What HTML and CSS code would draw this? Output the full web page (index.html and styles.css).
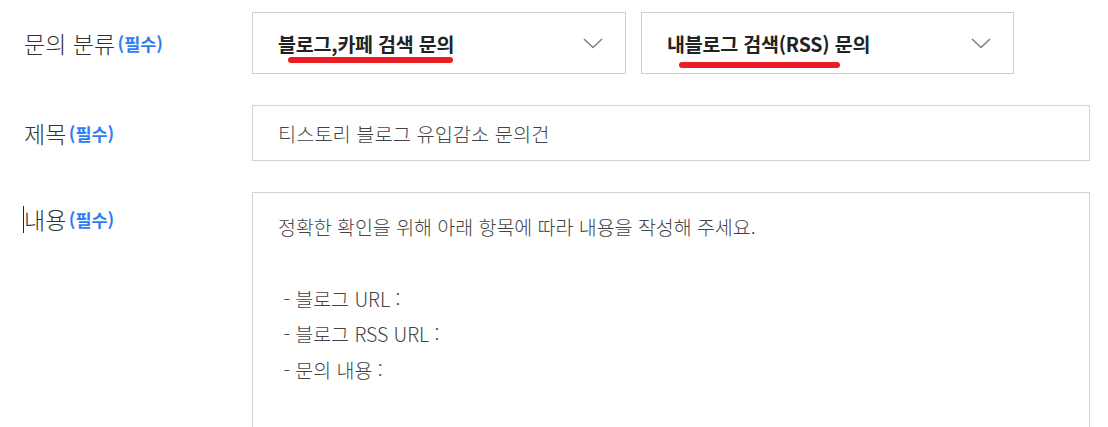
FILE: index.html
```html
<!DOCTYPE html>
<html lang="ko">
<head>
<meta charset="utf-8">
<title>문의하기</title>
<link rel="stylesheet" href="styles.css">
</head>
<body>
<form class="form">
  <div class="row row-select">
    <div class="label">문의 분류 <em class="req">(필수)</em></div>
    <div class="field selects">
      <div class="select select-1">
        <span class="select-text">블로그,카페 검색 문의</span>
        <svg class="chev" width="20" height="11" viewBox="0 0 20 11"><path d="M1 1 L10 9.5 L19 1" fill="none" stroke="#7d828a" stroke-width="1.6"/></svg>
        <span class="mark mark-1"></span>
      </div>
      <div class="select select-2">
        <span class="select-text">내블로그 검색(RSS) 문의</span>
        <svg class="chev" width="20" height="11" viewBox="0 0 20 11"><path d="M1 1 L10 9.5 L19 1" fill="none" stroke="#7d828a" stroke-width="1.6"/></svg>
        <span class="mark mark-2"></span>
      </div>
    </div>
  </div>
  <div class="row row-input">
    <div class="label">제목 <em class="req">(필수)</em></div>
    <div class="field">
      <div class="input">티스토리 블로그 유입감소 문의건</div>
    </div>
  </div>
  <div class="row row-area">
    <div class="label label-top"><span class="caret"></span>내용 <em class="req">(필수)</em></div>
    <div class="field">
      <div class="textarea">정확한 확인을 위해 아래 항목에 따라 내용을 작성해 주세요.

 - 블로그 URL :
 - 블로그 RSS URL :
 - 문의 내용 :</div>
    </div>
  </div>
</form>
</body>
</html>
```

FILE: styles.css
```css
* { box-sizing: border-box; }
html, body { margin: 0; padding: 0; background: #fff; }
body {
  font-family: "Noto Sans CJK KR", "Noto Sans", sans-serif;
  color: #333;
  overflow: hidden;
}
.form {
  display: flex;
  flex-direction: column;
  gap: 31px;
  padding-top: 12px;
}
.row {
  display: flex;
  align-items: center;
}
.row-area { align-items: flex-start; }
.label {
  width: 252px;
  flex: none;
  padding-left: 24px;
  font-size: 23px;
  font-weight: 300;
  color: #333;
  line-height: 27px;
  display: flex;
  align-items: center;
  white-space: pre;
}
.label-top { margin-top: 14px; }
.caret {
  display: inline-block;
  width: 1px;
  height: 27px;
  background: #222;
  margin-left: -1px;
}
.req {
  font-style: normal;
  font-size: 17.5px;
  font-weight: 700;
  color: #2d7cf5;
  margin-left: -4px;
}
.field { width: 838px; flex: none; }
.selects {
  display: flex;
  gap: 15px;
  width: 762px;
}
.select {
  position: relative;
  height: 62px;
  border: 1px solid #cfcfcf;
  display: flex;
  align-items: center;
  justify-content: space-between;
  padding: 0 22px 0 25px;
  font-size: 19.5px;
  font-weight: 700;
  color: #222;
  letter-spacing: -0.2px;
}
.select-1 { width: 374px; }
.select-2 { width: 373px; }
.chev { display: block; flex: none; }
.mark {
  position: absolute;
  height: 6px;
  background: #ec1c24;
  border-radius: 3px;
}
.mark-1 { left: 35px; top: 44px; width: 165px; }
.mark-2 { left: 37px; top: 49px; width: 161px; }
.input {
  height: 56px;
  border: 1px solid #d2d2d2;
  display: flex;
  align-items: center;
  padding-left: 25px;
  font-size: 19.8px;
  font-weight: 300;
  color: #444;
}
.textarea {
  height: 260px;
  border: 1px solid #d2d2d2;
  padding: 16px 25px;
  font-size: 19.5px;
  font-weight: 300;
  line-height: 35.8px;
  color: #444;
  white-space: pre-wrap;
  letter-spacing: -0.05px;
}
```
